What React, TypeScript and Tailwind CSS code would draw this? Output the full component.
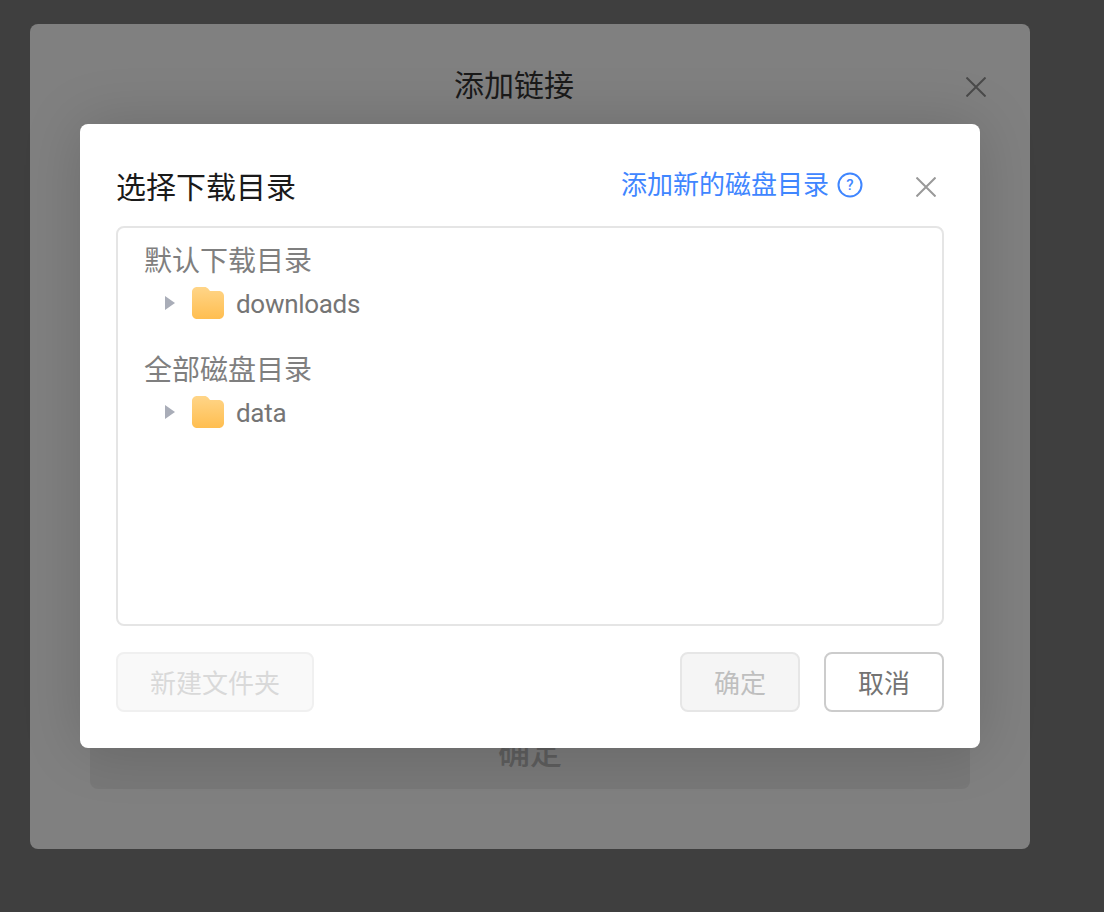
const FONT = "font-['Roboto','Noto_Sans_CJK_SC',sans-serif]";

function CloseIcon({ className }: { className: string }) {
  return (
    <svg className={className} viewBox="0 0 20 20" fill="none" stroke="currentColor" strokeWidth="2">
      <path d="M0.5 0.5L19.5 19.5M19.5 0.5L0.5 19.5" />
    </svg>
  );
}

function FolderIcon() {
  return (
    <svg className="block h-8 w-8 shrink-0" viewBox="0 0 32 32">
      <defs>
        <linearGradient id="folder-fill" x1="0" y1="0" x2="0" y2="1">
          <stop offset="0" stopColor="#ffd588" />
          <stop offset="1" stopColor="#ffbe50" />
        </linearGradient>
      </defs>
      <path
        d="M5 0H12.5C14 0 15 .6 16 1.6L18 4H27C29.8 4 32 6.2 32 9V27C32 29.8 29.8 32 27 32H5C2.2 32 0 29.8 0 27V5C0 2.2 2.2 0 5 0Z"
        fill="url(#folder-fill)"
      />
    </svg>
  );
}

function TreeRow({ name }: { name: string }) {
  return (
    <div className="flex h-8 items-center pl-[47px]">
      <span className="h-0 w-0 border-y-[7.5px] border-l-[10px] border-y-transparent border-l-[#a9adb8]" />
      <span className="ml-[17px]"><FolderIcon /></span>
      <span className="ml-3 pt-0.5 text-[26px] leading-8 tracking-[-0.3px] text-[#757575]">{name}</span>
    </div>
  );
}

function DirectoryDialog() {
  return (
    <div className="absolute left-[50px] top-[100px] flex h-[624px] w-[900px] flex-col rounded-lg bg-white px-9 pb-9 shadow-[0_0_60px_rgba(0,0,0,0.16)]">
      <div className="flex h-[102px] shrink-0 items-center pt-[24px]">
        <h2 className="pt-0.5 text-[30px] font-normal leading-10 text-[#1a1a1a]">选择下载目录</h2>
        <a className="ml-auto -translate-x-px -translate-y-0.5 text-[26px] leading-9 text-[#3f86ff]">添加新的磁盘目录</a>
        <svg className="ml-2 h-[26px] w-[26px] -translate-x-px -translate-y-0.5" viewBox="0 0 26 26" fill="none">
          <circle cx="13" cy="13" r="11.5" stroke="#3f86ff" strokeWidth="2" />
          <text x="13" y="18" textAnchor="middle" fontSize="15" fontWeight="500" fill="#3f86ff">?</text>
        </svg>
        <CloseIcon className="ml-[52px] mr-2 h-5 w-5 text-[#999999]" />
      </div>
      <div className="h-[400px] shrink-0 rounded-lg border-2 border-[#e5e5e5] pt-4">
        <div className="pl-[26px] text-[28px] leading-9 text-[#7f7f7f]">默认下载目录</div>
        <div className="mt-[7px]"><TreeRow name="downloads" /></div>
        <div className="mt-[34px] pl-[26px] text-[28px] leading-9 text-[#7f7f7f]">全部磁盘目录</div>
        <div className="mt-[7px]"><TreeRow name="data" /></div>
      </div>
      <div className="mt-[26px] flex h-[60px] shrink-0 gap-6">
        <button className="mr-auto w-[198px] rounded-lg border-2 border-[#f0f0f0] bg-[#f9f9f9] pt-1 text-[26px] text-[#d9d9d9]">新建文件夹</button>
        <button className="w-[120px] rounded-lg border-2 border-[#e6e6e6] bg-[#f5f5f5] pt-1 text-[26px] text-[#bfbfbf]">确定</button>
        <button className="w-[120px] rounded-lg border-2 border-[#cccccc] bg-white pt-1 text-[26px] text-[#737373]">取消</button>
      </div>
    </div>
  );
}

export default function App() {
  return (
    <div className={`h-[912px] w-[1104px] overflow-hidden bg-[#3f3f3f] pl-[30px] pt-6 ${FONT}`}>
      <div className="relative flex h-[825px] w-[1000px] flex-col rounded-lg bg-[#808080] px-[60px]">
        <div className="relative flex h-[124px] shrink-0 items-start justify-center pr-8 pt-[42px]">
          <h1 className="text-[30px] font-normal leading-10 text-[#1a1a1a]">添加链接</h1>
          <CloseIcon className="absolute right-[-16px] top-[53px] h-5 w-5 text-[#4a4a4a]" />
        </div>
        <div className="mb-[60px] mt-auto flex h-[72px] items-center justify-center rounded-lg bg-[#787878] text-[32px] font-medium text-[#5c5c5c]">
          确定
        </div>
        <DirectoryDialog />
      </div>
    </div>
  );
}
